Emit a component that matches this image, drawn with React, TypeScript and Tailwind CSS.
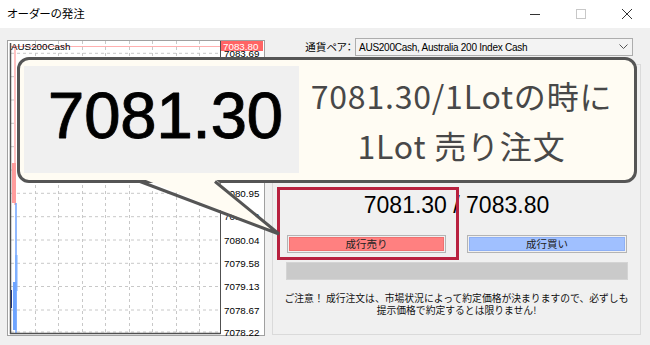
import React from "react";

const prices = [
  { p: "7083.69", y: 53.3 },
  { p: "7083.23", y: 76.7 },
  { p: "7082.77", y: 100 },
  { p: "7082.32", y: 123.3 },
  { p: "7081.86", y: 146.7 },
  { p: "7081.41", y: 170 },
  { p: "7080.95", y: 193.3 },
  { p: "7080.49", y: 216.7 },
  { p: "7080.04", y: 240 },
  { p: "7079.58", y: 263.3 },
  { p: "7079.13", y: 286.5 },
  { p: "7078.67", y: 310 },
  { p: "7078.22", y: 332 },
];
const vx = [35, 58, 82, 105, 129, 152, 176, 199];

// chart svg local coords: global - (8, 41)
const OX = 8;
const OY = 41;

function Chart() {
  return (
    <svg width="256" height="294" overflow="visible" className="block" style={{ fontFamily: '"Liberation Sans", Arial, sans-serif' }}>
      <rect x="0" y="0" width="256" height="294" fill="#ffffff" />
      {prices.map((r) => (
        <line key={"h" + r.p} x1={3} x2={212} y1={r.y - OY} y2={r.y - OY} stroke="#c8c8c8" strokeWidth="1" strokeDasharray="3 3" />
      ))}
      {vx.map((x) => (
        <line key={"v" + x} x1={x - OX + 0.5} x2={x - OX + 0.5} y1={0} y2={292} stroke="#c8c8c8" strokeWidth="1" strokeDasharray="3 3" />
      ))}
      {/* ask line */}
      <line x1={3} x2={212} y1={46 - OY + 0.5} y2={46 - OY + 0.5} stroke="#ffb0b0" strokeWidth="1" />
      {/* candles */}
      <line x1={15 - OX} x2={15 - OX} y1={4} y2={205 - OY} stroke="#ff9a9a" strokeWidth="1.2" />
      <rect x={12 - OX} y={163 - OY} width="4" height="40" fill="#ff9d9d" />
      <line x1={16 - OX} x2={16 - OX} y1={203 - OY} y2={292} stroke="#4a8cff" strokeWidth="1.2" />
      <rect x={15 - OX} y={255 - OY} width="2.5" height="36" fill="#7fb0ff" />
      <rect x={10.5 - OX} y={290 - OY} width="1.5" height="18" fill="#0a2a90" />
      <rect x={13 - OX} y={282 - OY} width="3.5" height="48" fill="#6ea4ff" />
      {/* axes */}
      <line x1={2.5} x2={2.5} y1={2} y2={293} stroke="#505050" strokeWidth="1.5" />
      <line x1={2} x2={212.5} y1={292.5} y2={292.5} stroke="#505050" strokeWidth="1.5" />
      <line x1={212.5} x2={212.5} y1={0} y2={293} stroke="#505050" strokeWidth="1" />
      {prices.map((r) => (
        <text key={"t" + r.p} x={224 - OX} y={r.y - OY + 3.5} fontSize="9.8" fill="#000">
          {r.p}
        </text>
      ))}
      <rect x={221 - OX} y={0} width="42" height="10" fill="#ff6464" />
      <text x={223 - OX} y={8.5} fontSize="9.8" fill="#ffffff">7083.80</text>
      <text x={11 - OX} y={46 - OY + 3.5} fontSize="9.8" fill="#000">AUS200Cash</text>
    </svg>
  );
}

export default function App() {
  const jp = '"Noto Sans CJK JP", "Liberation Sans", sans-serif';
  const ui = '"Liberation Sans", "Noto Sans CJK JP", sans-serif';
  return (
    <div className="relative w-[650px] h-[345px] overflow-hidden bg-[#f0f0f0]" style={{ fontFamily: ui }}>
      {/* Title bar */}
      <div className="h-[28px] bg-white flex items-center pl-[7px] relative">
        <span className="text-[11.5px] text-black [font-feature-settings:'palt']" style={{ fontFamily: jp }}>
          オーダーの発注
        </span>
        <div className="ml-auto flex items-center h-full">
          <div className="w-[46px] h-full flex items-center justify-center">
            <svg width="12" height="12"><line x1="1" x2="11" y1="6.5" y2="6.5" stroke="#333" strokeWidth="1" /></svg>
          </div>
          <div className="w-[46px] h-full flex items-center justify-center">
            <svg width="12" height="12"><rect x="1.5" y="1.5" width="9" height="9" fill="none" stroke="#c8c8c8" strokeWidth="1" /></svg>
          </div>
          <div className="w-[46px] h-full flex items-center justify-center">
            <svg width="12" height="12"><path d="M1 1 L11 11 M11 1 L1 11" stroke="#333" strokeWidth="1" /></svg>
          </div>
        </div>
      </div>

      {/* Body */}
      <div className="flex items-start pl-[7px]">
        <div className="mt-[12px] w-[258px] h-[296px] border border-[#a0a0a0] bg-white">
          <Chart />
        </div>
        <div className="ml-[7px] w-[369px] flex flex-col">
          <div className="mt-[10px] flex items-center justify-end pr-[8px] h-[18px]">
            <span className="text-[10.5px] text-black mr-[3px] [font-feature-settings:'palt']" style={{ fontFamily: jp }}>
              通貨ペア：
            </span>
            <div className="w-[278px] h-[18px] border border-[#adadad] bg-[#f3f3f3] flex items-center pl-[3px] pr-[4px]">
              <span className="text-[10px] tracking-[-0.25px] text-black" style={{ fontFamily: ui }}>
                AUS200Cash, Australia 200 Index Cash
              </span>
              <svg className="ml-auto" width="9" height="6">
                <path d="M0.5 0.5 L4.5 4.5 L8.5 0.5" fill="none" stroke="#555" strokeWidth="1" />
              </svg>
            </div>
          </div>
          <div className="mt-[8px] h-[271px] border border-[#dadada] flex flex-col items-center">
            <div className="mt-[127px] h-[26px] leading-[26px] text-[23px] text-black" style={{ fontFamily: ui }}>
              7081.30 / 7083.80
            </div>
            <div className="mt-[17px] w-full flex pl-[14px] pr-[13px] gap-[21px]">
              <div className="w-[159px] h-[18px] border border-[#b4b4b4] p-[1px]">
                <div className="w-full h-full bg-[#ff8080] border border-[#f07070] flex items-center justify-center text-[10.5px] text-[#222]" style={{ fontFamily: jp }}>
                  成行売り
                </div>
              </div>
              <div className="w-[160px] h-[18px] border border-[#b4b4b4] p-[1px]">
                <div className="w-full h-full bg-[#a0c0ff] border border-[#8eb0f5] flex items-center justify-center text-[10.5px] text-[#222]" style={{ fontFamily: jp }}>
                  成行買い
                </div>
              </div>
            </div>
            <div className="mt-[9px] w-[342px] h-[18px] bg-[#cacaca] border border-[#d4d4d4]" />
            <div className="mt-[12px] text-center text-[9.8px] leading-[12px] text-[#111] whitespace-nowrap" style={{ fontFamily: jp }}>
              <div>ご注意！ 成行注文は、市場状況によって約定価格が決まりますので、必ずしも</div>
              <div>提示価格で約定するとは限りません!</div>
            </div>
          </div>
        </div>
      </div>

      {/* Red highlight box */}
      <div className="absolute left-[277px] top-[187px] w-[182px] h-[73px] border-[3px] border-[#b8213f]" />

      {/* Callout */}
      <div className="absolute left-[17px] top-[57px] w-[620px] h-[126px] rounded-[12px] border-[3px] border-[#555555] bg-[#fffcf3] flex items-stretch pl-[4px] pt-[6px] pb-[7px]">
        <div className="w-[275px] bg-[#f0f0f0] flex items-center justify-center pl-[8px] pb-[8px]">
          <span
            className="text-[65px] leading-none text-black [-webkit-text-stroke:0.8px_#000] [text-shadow:-1px_0_0_rgba(200,130,60,0.55),1px_0_0_rgba(40,110,200,0.55)]"
            style={{ fontFamily: ui }}
          >
            7081.30
          </span>
        </div>
        <div className="flex-1 flex flex-col items-center justify-center pr-[10px] text-[#484848]" style={{ fontFamily: jp }}>
          <div className="text-[32px] leading-[50px] tracking-[0.8px]">7081.30/1Lotの時に</div>
          <div className="text-[32px] leading-[50px] tracking-[0.8px]">1Lot 売り注文</div>
        </div>
      </div>
      {/* Callout tail */}
      <svg className="absolute left-0 top-0 pointer-events-none" width="650" height="345">
        <polygon points="141,178 214,178 279,234" fill="#fffcf3" />
        <polyline points="140,181.5 279,234 215,181.5" fill="none" stroke="#555555" strokeWidth="3" strokeLinejoin="miter" />
      </svg>
    </div>
  );
}
